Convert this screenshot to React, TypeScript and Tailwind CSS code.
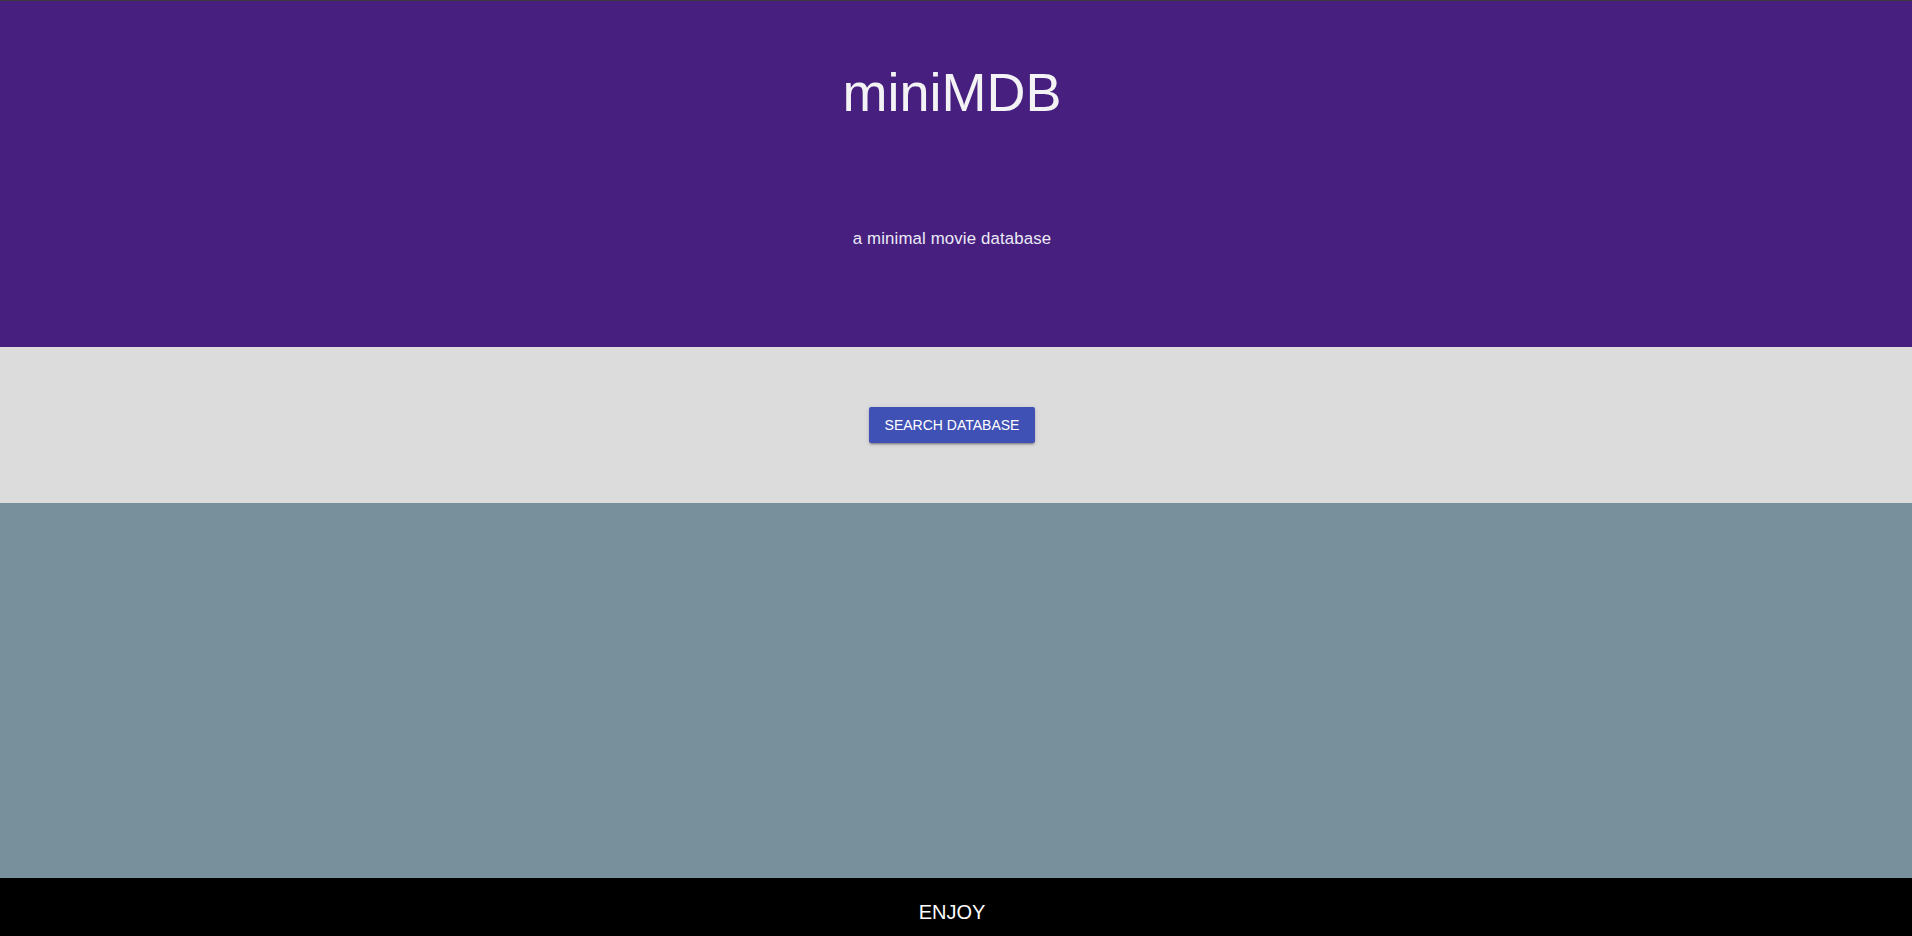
export default function App() {
  return (
    <div className="flex min-h-screen flex-col font-['Liberation_Sans',Arial,sans-serif]">
      {/* header */}
      <header className="flex h-[347px] flex-col items-center border-t border-[#3a3a3a] bg-[#47207f] pr-[8px]">
        <h1 className="mt-[64px] text-[54px] leading-none text-[#f3f2f5]">miniMDB</h1>
        <p className="mt-[112px] text-[16.8px] leading-none tracking-[0.15px] text-[#ecebf5]">
          a minimal movie database
        </p>
      </header>

      {/* search */}
      <section className="flex h-[156px] items-center justify-center bg-[#dcdcdc] pr-[8px]">
        <button className="h-[36px] w-[166px] rounded-[2px] bg-[#3f51b5] text-[14px] text-white shadow-[0_2px_2px_rgba(0,0,0,0.14),0_3px_1px_-2px_rgba(0,0,0,0.2),0_1px_5px_rgba(0,0,0,0.12)]">
          SEARCH DATABASE
        </button>
      </section>

      {/* results */}
      <main className="h-[375px] bg-[#78909c]" />

      <footer className="flex h-[58px] items-center justify-center bg-black pr-[8px] pt-[9px] text-[20px] text-white">
        ENJOY
      </footer>
    </div>
  );
}
